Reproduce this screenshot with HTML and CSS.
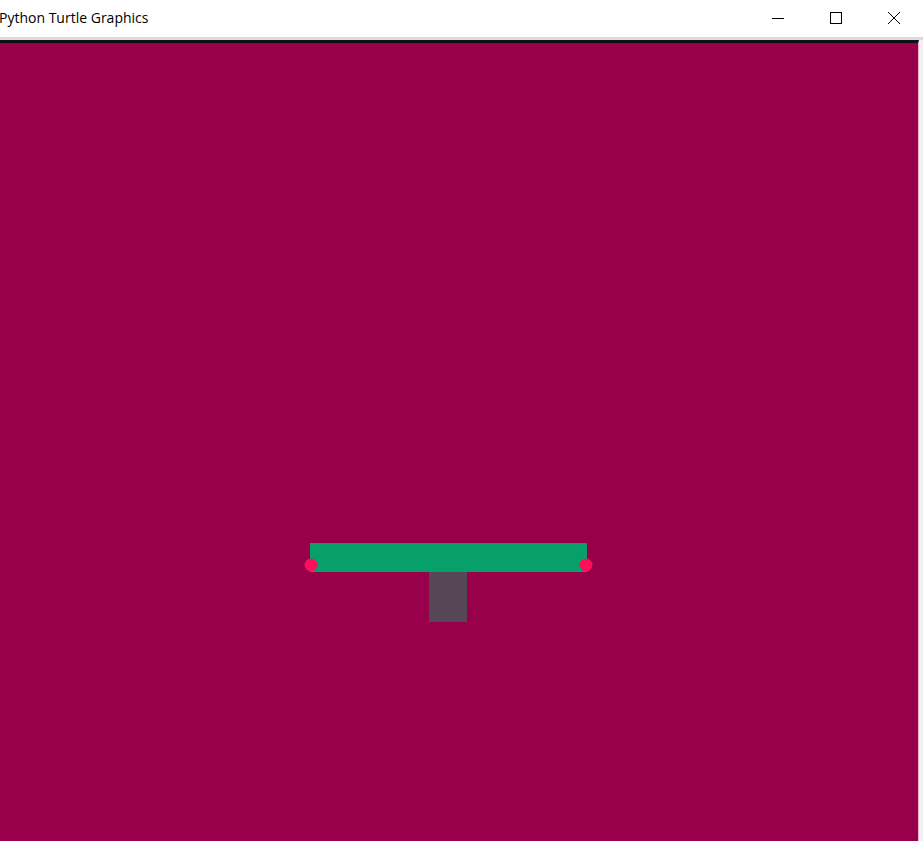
FILE: index.html
```html
<!DOCTYPE html>
<html>
<head>
<meta charset="utf-8">
<title>Python Turtle Graphics</title>
<link rel="stylesheet" href="styles.css">
</head>
<body>
<div class="window">
  <div class="titlebar">
    <span class="title">Python Turtle Graphics</span>
    <div class="controls">
      <span class="ctl">
        <svg width="14" height="14" viewBox="0 0 14 14"><path d="M1 7.5H13" stroke="#000" stroke-width="1"/></svg>
      </span>
      <span class="ctl">
        <svg width="14" height="14" viewBox="0 0 14 14"><rect x="1.5" y="1.5" width="11" height="11" fill="none" stroke="#000" stroke-width="1"/></svg>
      </span>
      <span class="ctl">
        <svg width="14" height="14" viewBox="0 0 14 14"><path d="M1 1L13 13M13 1L1 13" stroke="#000" stroke-width="1"/></svg>
      </span>
    </div>
  </div>
  <div class="frame">
    <div class="canvas">
      <svg class="drawing" width="918" height="798" viewBox="0 0 918 798">
        <rect x="310" y="500" width="277" height="29" fill="#08a06a"/>
        <rect x="429" y="529" width="38" height="50" fill="#554755"/>
        <circle cx="311" cy="522" r="6.5" fill="#ff0f5a"/>
        <circle cx="586" cy="522" r="6.5" fill="#ff0f5a"/>
      </svg>
    </div>
  </div>
</div>
</body>
</html>
```

FILE: styles.css
```css
html, body {
  margin: 0;
  padding: 0;
  background: #ffffff;
  overflow: hidden;
}
.window {
  width: 923px;
  height: 841px;
  display: flex;
  flex-direction: column;
}
.titlebar {
  height: 37px;
  background: #ffffff;
  display: flex;
  align-items: center;
  justify-content: space-between;
}
.title {
  font-family: "Open Sans", "Noto Sans", sans-serif;
  font-size: 14px;
  color: #000;
  margin-left: -1px;
  margin-top: -2px;
}
.controls {
  display: flex;
  align-self: stretch;
}
.ctl {
  width: 58px;
  display: flex;
  align-items: center;
  justify-content: center;
}
.ctl svg {
  margin-top: -1px;
}
.frame {
  flex: 1;
  border-top: 3px solid #dcdcdc;
  background: #f0f0f0;
  display: flex;
}
.canvas {
  width: 918px;
  height: 798px;
  border-top: 3px solid #111111;
  border-right: 1px solid #f2b3cf;
  background: #98004b;
}
.drawing {
  display: block;
}
```
